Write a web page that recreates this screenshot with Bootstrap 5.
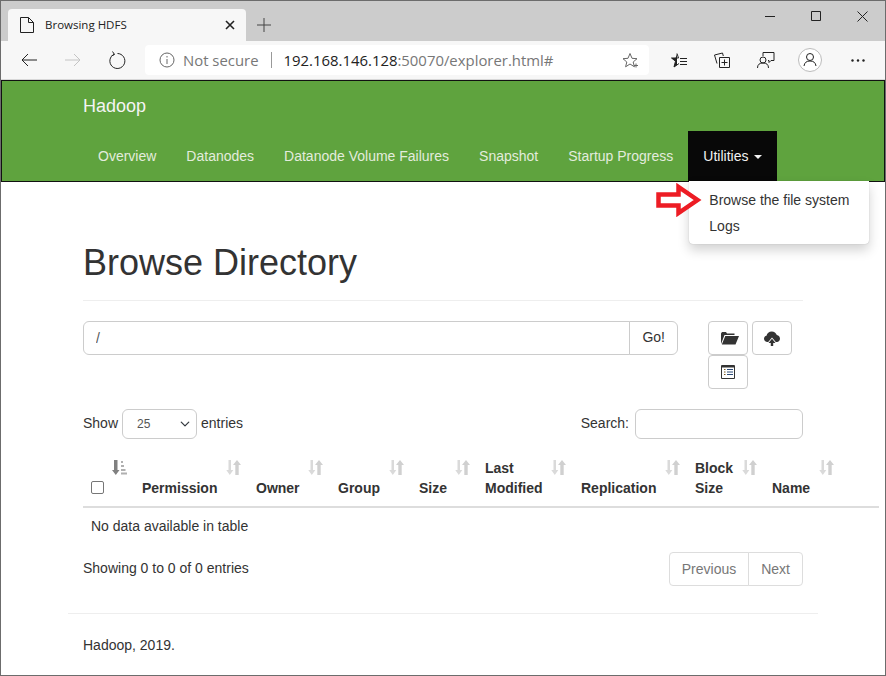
<!DOCTYPE html>
<html lang="en">
<head>
<meta charset="UTF-8">
<meta name="viewport" content="width=device-width, initial-scale=1">
<title>Browsing HDFS</title>
<link href="https://cdn.jsdelivr.net/npm/bootstrap@5.3.3/dist/css/bootstrap.min.css" rel="stylesheet">
<style>
:root { --bs-border-radius: 4px; }
body { margin: 0; background: #fff; color: #333; font: 14px/20px "Liberation Sans", Arial, sans-serif; overflow: hidden; }
.win-frame { position: relative; width: 886px; height: 676px; border: 1px solid #6c6c6c; overflow: hidden; }

/* browser chrome */
.tab-strip { height: 40px; background: #ccc; font-family: "Open Sans", "Noto Sans", sans-serif; }
.tab-item { width: 238px; height: 32px; margin: 8px 0 0 7px; padding: 0 11px 0 12px; background: #f7f7f7; border-radius: 4px 4px 0 0; font-size: 11.5px; color: #222; }
.tab-title { margin-left: 11px; }
.tab-new { width: 30px; margin: 8px 0 0 3px; }
.win-btn { width: 46px; height: 30px; }
.tool-strip { height: 39px; background: #f7f7f7; padding-left: 6px; border-bottom: 1px solid #d8d8d8; }
.tool-btn { width: 44px; height: 38px; flex: none; }
.url-bar { width: 504px; height: 30px; margin: 0 7px 0 6px; padding: 0 10px 0 14px; background: #fff; border-radius: 4px; font: 14.9px "Open Sans", "Noto Sans", sans-serif; color: #777; }
.url-sep { width: 1px; height: 16px; margin: 0 12px; background: #999; }
.url-host { color: #222; }

/* hadoop navbar */
.hd-navbar { background: #5fa33e; border: 1px solid #111; height: 102px; padding: 0 0 0 81px; display: block; }
.hd-brand { display: block; height: 50px; font-size: 18px; line-height: 50px; color: #f4f4f4; }
.hd-navbar .nav-link { padding: 15px; color: #e3ecdd; font-size: 14px; line-height: 20px; }
.hd-navbar .nav-link.hd-open { background: #080808; color: #f2f2f2; }
.hd-caret { display: inline-block; margin-left: 2px; vertical-align: middle; border-top: 4px solid; border-left: 4px solid transparent; border-right: 4px solid transparent; }
.hd-menu { top: 100%; left: 1px; width: 180px; min-width: 0; margin: 0; padding: 6px 0 5px; font-size: 14px; border: 0; border-radius: 0 0 4px 4px; box-shadow: 0 6px 12px rgba(0,0,0,.18), 0 0 1px rgba(0,0,0,.3); }
.hd-menu .dropdown-item { padding: 3px 20px; line-height: 20px; color: #333; }
.mark-arrow { position: absolute; left: -33px; top: 2px; }

/* page */
.page-main { width: 720px; margin-left: 82px; }
.page-head { margin: 61px 0 20px; padding-bottom: 17px; border-bottom: 1px solid #eee; }
.page-head h1 { margin: 0; font: 500 36px/40px "Liberation Sans", Arial, sans-serif; color: #333; }
.path-group { width: 595px; }
.path-group .form-control, .path-group .btn { height: 34px; font-size: 14px; line-height: 20px; color: #555; border-color: #ccc; padding: 6px 12px; }
.path-group .btn { color: #333; padding: 5px 12px 7px; }
.act-group { width: 90px; margin-left: 30px; column-gap: 4px; }
.act-btn { width: 40px; height: 34px; padding: 0; border: 1px solid #ccc; border-radius: 4px; background: #fff; }
.filter-row { margin: 20px 0 10px; height: 30px; line-height: 28px; }
.len-select { width: 75px; height: 30px; margin: 0 4px; padding: 0 0 0 14px; font-size: 12px; line-height: 28px; color: #555; border-color: #ccc; background-size: 12px 10px; background-position: right 5px center; }
.search-box { width: 168px; height: 30px; margin-left: 6px; border-color: #ccc; }
.data-table { width: 796px; max-width: none; margin: 0; table-layout: fixed; color: #333; }
.data-table th { position: relative; padding: 8px; height: 58px; vertical-align: bottom; line-height: 20px; font-weight: 700; border-bottom: 2px solid #ddd; }
.data-table td { padding: 8px; line-height: 20px; border-bottom: 0; }
.data-table .form-check-input { display: block; width: 13px; height: 13px; margin: 0 0 4px; border-color: #767676; border-radius: 2px; }
.sort-mark { position: absolute; top: 11px; right: 7px; }
.info-row { margin-top: 8px; }
.info-text { margin-top: 6px; }
.pager-box { margin: 0; }
.pager-box .page-link { padding: 6px 12px; font-size: 14px; line-height: 20px; color: #777; border-color: #ddd; background: #fff; }
.page-foot { width: 750px; margin: 27px 0 0 67px; padding-top: 21px; border-top: 1px solid #eee; padding-left: 15px; }
</style>
</head>
<body>
<svg width="0" height="0" class="position-absolute">
  <symbol id="sort-both" viewBox="0 0 15 15">
    <path fill="#dadada" d="M2.500 0h2.500v10h2.300L3.800 15 .3 10h2.200z"/>
    <path fill="#d0d0d0" d="M9.300 15V5H7L11 0l4 5h-2.300v10z"/>
  </symbol>
</svg>

<div class="win-frame">
  <!-- tab strip -->
  <div class="tab-strip d-flex">
    <div class="tab-item d-flex align-items-center">
      <svg width="14" height="16" viewBox="0 0 14 16" fill="none" stroke="#222"><path d="M.5.500h8l5 5v10H.5zM8.500.500v5h5"/></svg>
      <span class="tab-title flex-grow-1">Browsing HDFS</span>
      <svg width="10" height="10" viewBox="0 0 10 10" stroke="#222" stroke-width="1.600"><path d="M1 1l8 8M9 1l-8 8"/></svg>
    </div>
    <div class="tab-new d-flex align-items-center justify-content-center">
      <svg width="14" height="14" viewBox="0 0 14 14" stroke="#444"><path d="M7 0v14M0 7h14"/></svg>
    </div>
    <div class="ms-auto d-flex align-items-start">
      <div class="win-btn d-flex align-items-center justify-content-center"><svg width="10" height="10" stroke="#222"><path d="M0 5.500h10"/></svg></div>
      <div class="win-btn d-flex align-items-center justify-content-center"><svg width="10" height="10" fill="none" stroke="#222"><path d="M.5.500h9v9h-9z"/></svg></div>
      <div class="win-btn d-flex align-items-center justify-content-center"><svg width="11" height="11" stroke="#222"><path d="M.5.500l10 10M10.500.500l-10 10"/></svg></div>
    </div>
  </div>

  <!-- toolbar -->
  <div class="tool-strip d-flex align-items-center">
    <div class="tool-btn d-flex align-items-center justify-content-center"><svg width="16" height="14" viewBox="0 0 16 14" fill="none" stroke="#222"><path d="M16 7H1M7 1L1 7l6 6"/></svg></div>
    <div class="tool-btn d-flex align-items-center justify-content-center"><svg width="16" height="14" viewBox="0 0 16 14" fill="none" stroke="#c4c4c4"><path d="M0 7h15M9 1l6 6-6 6"/></svg></div>
    <div class="tool-btn d-flex align-items-center justify-content-center"><svg width="17" height="18" viewBox="0 0 17 18" fill="none" stroke="#222"><path d="M5.200 3.200a7.500 7.500 0 1 0 3.300-.7M3.500 .5l2 3-3 1.500"/></svg></div>
    <div class="url-bar d-flex align-items-center">
      <svg width="16" height="16" viewBox="0 0 16 16" fill="none" stroke="#666"><circle cx="8" cy="8" r="7"/><path d="M8 7v5M8 4v1.500"/></svg>
      <span class="ms-2">Not secure</span>
      <span class="url-sep"></span>
      <span><span class="url-host">192.168.146.128</span>:50070/explorer.html#</span>
      <svg class="ms-auto" width="17" height="17" viewBox="0 0 17 17" fill="none" stroke="#666"><path d="M8 1.500l2 4.800 5 .4-3.800 3.300 1.200 4.800L8 12l-4.400 2.800 1.200-4.800L1 6.700l5-.4zM12 13.500h4M14 11.500v4"/></svg>
    </div>
    <div class="tool-btn d-flex align-items-center justify-content-center"><svg width="17" height="17" viewBox="0 0 17 17"><path fill="#fff" stroke="#222" stroke-linejoin="round" d="M7 1.500l1.500 4.500h-7l4 3.200L4 15l5-3.500"/><path fill="#222" d="M7 1.500L5.600 6H1.500l4 3.200L4 15l3-2.100z"/><path fill="none" stroke="#222" d="M10 6.500h7M10 9.500h7M10 12.500h7"/></svg></div>
    <div class="tool-btn d-flex align-items-center justify-content-center"><svg width="16" height="16" viewBox="0 0 16 16" fill="none" stroke="#222"><path d="M3 11.500L.5 3l8-2 .8 3M5.500 5.500h10v10h-10zM10.500 7.500v6M7.500 10.500h6"/></svg></div>
    <div class="tool-btn d-flex align-items-center justify-content-center"><svg width="18" height="17" viewBox="0 0 18 17" fill="none" stroke="#222"><path d="M6 4V.5h11v8h-3l-2 2v-2h-1"/><circle cx="6" cy="8" r="3"/><path d="M.5 16c0-3.500 2-5 5.500-5s5.500 1.500 5.500 5"/></svg></div>
    <div class="tool-btn d-flex align-items-center justify-content-center"><svg width="24" height="24" viewBox="0 0 24 24" fill="#fff" stroke="#bbb"><circle cx="12" cy="12" r="11.500"/><g fill="none" stroke="#222"><circle cx="12" cy="9" r="3.500"/><path d="M6 18c.5-3.500 2.500-5 6-5s5.500 1.500 6 5"/></g></svg></div>
    <div class="tool-btn d-flex align-items-center justify-content-center ms-1"><svg width="14" height="3" viewBox="0 0 14 3" fill="#222"><circle cx="1.500" cy="1.500" r="1.200"/><circle cx="7" cy="1.500" r="1.200"/><circle cx="12.500" cy="1.500" r="1.200"/></svg></div>
  </div>

  <!-- navbar -->
  <nav class="hd-navbar">
    <a class="hd-brand text-decoration-none" href="#">Hadoop</a>
    <ul class="nav">
      <li class="nav-item"><a class="nav-link" href="#">Overview</a></li>
      <li class="nav-item"><a class="nav-link" href="#">Datanodes</a></li>
      <li class="nav-item"><a class="nav-link" href="#">Datanode Volume Failures</a></li>
      <li class="nav-item"><a class="nav-link" href="#">Snapshot</a></li>
      <li class="nav-item"><a class="nav-link" href="#">Startup Progress</a></li>
      <li class="nav-item position-relative">
        <a class="nav-link hd-open" href="#">Utilities <span class="hd-caret"></span></a>
        <ul class="dropdown-menu show hd-menu">
          <li><a class="dropdown-item" href="#">Browse the file system</a></li>
          <li><a class="dropdown-item" href="#">Logs</a></li>
          <svg class="mark-arrow" width="47" height="34" viewBox="0 0 47 34" fill="#fff" stroke="#ed1c24" stroke-width="4.500"><path d="M2.500 11.500h20V4l19 13-19 13v-7.500h-20z"/></svg>
        </ul>
      </li>
    </ul>
  </nav>

  <!-- content -->
  <div class="page-main">
    <div class="page-head"><h1>Browse Directory</h1></div>

    <div class="d-flex align-items-start">
      <div class="input-group path-group">
        <input type="text" class="form-control" value="/">
        <button class="btn btn-outline-secondary" type="button">Go!</button>
      </div>
      <div class="act-group d-flex flex-wrap">
        <button class="act-btn d-flex align-items-center justify-content-center" type="button">
          <svg class="ms-1" width="18" height="14" viewBox="0 0 18 14" fill="#333"><path d="M0 13V2.500L1 1h4l1 1.500h7.500V4H3.500L0 13zM4.300 5H18l-3.500 8.500H.8z"/></svg>
        </button>
        <button class="act-btn d-flex align-items-center justify-content-center" type="button">
          <svg width="16" height="15" viewBox="0 0 16 15" fill="#333"><path d="M3.500 11C1.500 11 0 9.500 0 7.800 0 6.200 1 5 2.500 4.800 3 2.300 5 .5 7.800.5c2.400 0 4.300 1.500 5 3.600C14.800 4.300 16 6 16 7.800 16 9.500 14.500 11 13 11h-1.200L8 6.500 4.200 11z"/><path d="M8 7.800L11.500 12H9.200v3H6.800v-3H4.500z"/></svg>
        </button>
        <button class="act-btn d-flex align-items-center justify-content-center" type="button">
          <svg width="14" height="14" viewBox="0 0 14 14"><path fill="#fff" stroke="#333" d="M.5.500h13v13H.5z"/><path fill="#333" d="M1 1h12v1.500H1z"/><path stroke="#7a5a20" d="M3 4.500h1.500M3 7h1.500M3 9.500h1.500"/><path stroke="#2b4a78" d="M6 4.500h6M6 7h6M6 9.500h6"/></svg>
        </button>
      </div>
    </div>

    <div class="filter-row d-flex align-items-start justify-content-between">
      <div class="d-flex align-items-start">Show
        <select class="form-select len-select"><option>25</option></select>
        entries</div>
      <div class="d-flex align-items-start">Search:
        <input type="search" class="form-control search-box"></div>
    </div>

    <table class="table data-table">
      <colgroup>
        <col style="width:51px"><col style="width:114px"><col style="width:82px"><col style="width:81px"><col style="width:66px"><col style="width:96px"><col style="width:114px"><col style="width:77px"><col style="width:77px"><col style="width:38px">
      </colgroup>
      <thead>
        <tr>
          <th>
            <input class="form-check-input" type="checkbox">
            <svg class="sort-mark" width="15" height="15" viewBox="0 0 15 15"><path fill="#808080" d="M2 0h3.500v10h2L3.800 15 0 10h2z"/><path fill="#b0b0b0" d="M9 1h2v2H9zM9 5h3v2H9zM9 9h4.500v2H9zM9 12.500h6v2H9z"/></svg>
          </th>
          <th>Permission<svg class="sort-mark" width="15" height="15"><use href="#sort-both"/></svg></th>
          <th>Owner<svg class="sort-mark" width="15" height="15"><use href="#sort-both"/></svg></th>
          <th>Group<svg class="sort-mark" width="15" height="15"><use href="#sort-both"/></svg></th>
          <th>Size<svg class="sort-mark" width="15" height="15"><use href="#sort-both"/></svg></th>
          <th>Last Modified<svg class="sort-mark" width="15" height="15"><use href="#sort-both"/></svg></th>
          <th>Replication<svg class="sort-mark" width="15" height="15"><use href="#sort-both"/></svg></th>
          <th>Block Size<svg class="sort-mark" width="15" height="15"><use href="#sort-both"/></svg></th>
          <th>Name<svg class="sort-mark" width="15" height="15"><use href="#sort-both"/></svg></th>
          <th></th>
        </tr>
      </thead>
      <tbody>
        <tr><td colspan="10">No data available in table</td></tr>
      </tbody>
    </table>

    <div class="info-row d-flex align-items-start justify-content-between">
      <div class="info-text">Showing 0 to 0 of 0 entries</div>
      <ul class="pagination pager-box">
        <li class="page-item disabled"><a class="page-link" href="#">Previous</a></li>
        <li class="page-item disabled"><a class="page-link" href="#">Next</a></li>
      </ul>
    </div>
  </div>

  <div class="page-foot">Hadoop, 2019.</div>
</div>

<script src="https://cdn.jsdelivr.net/npm/bootstrap@5.3.3/dist/js/bootstrap.bundle.min.js"></script>
</body>
</html>
